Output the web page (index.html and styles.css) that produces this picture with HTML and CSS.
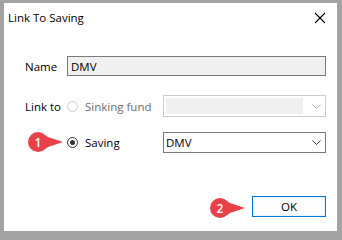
FILE: index.html
```html
<!DOCTYPE html>
<html>
<head>
<meta charset="utf-8">
<link rel="stylesheet" href="styles.css">
</head>
<body>
<div class="dialog">
  <div class="titlebar">
    <span class="title">Link To Saving</span>
    <svg class="close" width="12" height="12" viewBox="0 0 12 12"><path d="M1 1 L11 11 M11 1 L1 11" stroke="#000" stroke-width="1.1" fill="none"/></svg>
  </div>
  <div class="form">
    <div class="label row1">Name</div>
    <div class="textbox row1">DMV</div>

    <div class="label row2">Link to</div>
    <div class="radio-item row2 disabled"><span class="radio"></span><span>Sinking fund</span></div>
    <div class="combo disabled row2"><span class="combo-fill"></span><svg class="chev" width="9" height="5" viewBox="0 0 9 5"><path d="M0.5 0.5 L4.5 4.5 L8.5 0.5" stroke="#b5b5b5" fill="none"/></svg></div>

    <div class="radio-item row3"><span class="radio checked"><span class="dot"></span></span><span>Saving</span></div>
    <div class="combo row3"><span class="combo-text">DMV</span><svg class="chev" width="9" height="5" viewBox="0 0 9 5"><path d="M0.5 0.5 L4.5 4.5 L8.5 0.5" stroke="#333" fill="none"/></svg></div>
  </div>
  <div class="footer">
    <button class="ok">OK</button>
  </div>
  <svg class="badge badge1" width="38" height="22" viewBox="0 0 38 22"><path d="M11 1 A10 10 0 1 0 11 21 C15 21 18 18 21 16 L36 11 L21 6 C18 4 15 1 11 1 Z" fill="#e8414a"/><text x="11" y="15.5" text-anchor="middle" class="badge-text">1</text></svg>
  <svg class="badge badge2" width="38" height="22" viewBox="0 0 38 22"><path d="M11 1 A10 10 0 1 0 11 21 C15 21 18 18 21 16 L36 11 L21 6 C18 4 15 1 11 1 Z" fill="#e8414a"/><text x="11" y="15.5" text-anchor="middle" class="badge-text">2</text></svg>
</div>
</body>
</html>
```
FILE: styles.css
```css
html, body {
  margin: 0;
  padding: 0;
  width: 342px;
  height: 236px;
  background: #a3a3a3;
  overflow: hidden;
}
body {
  font-family: "Open Sans", "Noto Sans", "Liberation Sans", sans-serif;
  font-size: 11.5px;
  color: #000;
}
.dialog {
  position: relative;
  margin: 3px 5px 0 4px;
  width: 333px;
  height: 228px;
  background: #fff;
  display: flex;
  flex-direction: column;
}
.titlebar {
  height: 29px;
  display: flex;
  align-items: center;
  justify-content: space-between;
  padding: 0 11px 0 4px;
  flex-shrink: 0;
}
.close {
  display: block;
}
.form {
  margin-top: 24px;
  padding-left: 21px;
  padding-right: 11px;
  display: grid;
  grid-template-columns: 42px 96px 1fr;
  grid-template-rows: 20px 19px 22px 15px 21px;
}
.label {
  grid-column: 1;
  display: flex;
  align-items: center;
}
.row1 { grid-row: 1; }
.row2 { grid-row: 3; }
.row3 { grid-row: 5; }
.textbox {
  grid-column: 2 / 4;
  border: 1px solid #7a7a7a;
  background: #f0f0f0;
  display: flex;
  align-items: center;
  padding-left: 3px;
  box-sizing: border-box;
}
.radio-item {
  grid-column: 2;
  display: flex;
  align-items: center;
  gap: 7px;
}
.radio-item.disabled { color: #6d6d6d; }
.radio {
  width: 11px;
  height: 11px;
  box-sizing: border-box;
  border-radius: 50%;
  border: 1px solid #cccccc;
  background: #fff;
  display: flex;
  align-items: center;
  justify-content: center;
  flex-shrink: 0;
}
.radio.checked {
  border: 1px solid #333;
}
.dot {
  width: 5px;
  height: 5px;
  border-radius: 50%;
  background: #333;
}
.combo {
  grid-column: 3;
  border: 1px solid #7a7a7a;
  background: #fff;
  display: flex;
  align-items: center;
  box-sizing: border-box;
}
.combo.disabled {
  border-color: #cccccc;
  padding: 2px 0 2px 2px;
}
.combo-fill {
  flex: 1;
  align-self: stretch;
  background: #f0f0f0;
  margin-right: 9px;
}
.combo-text {
  flex: 1;
  padding-left: 2px;
}
.chev {
  display: block;
  margin-right: 4px;
  flex-shrink: 0;
}
.footer {
  margin-top: auto;
  margin-bottom: 14px;
  padding-right: 11px;
  display: flex;
  justify-content: flex-end;
}
.ok {
  width: 74px;
  height: 21px;
  border: 1px solid #0078d7;
  background: #fdfdfd;
  box-shadow: inset 0 0 0 1px #e8f2fb;
  font-family: "Open Sans", "Noto Sans", "Liberation Sans", sans-serif;
  font-size: 11.5px;
  color: #000;
  padding: 0;
}
.badge {
  position: absolute;
  display: block;
}
.badge1 { left: 23px; top: 128px; }
.badge2 { left: 205px; top: 194px; }
.badge-text {
  font-family: "Open Sans", "Liberation Sans", sans-serif;
  font-size: 12px;
  font-weight: 600;
  fill: #fff;
}
```
